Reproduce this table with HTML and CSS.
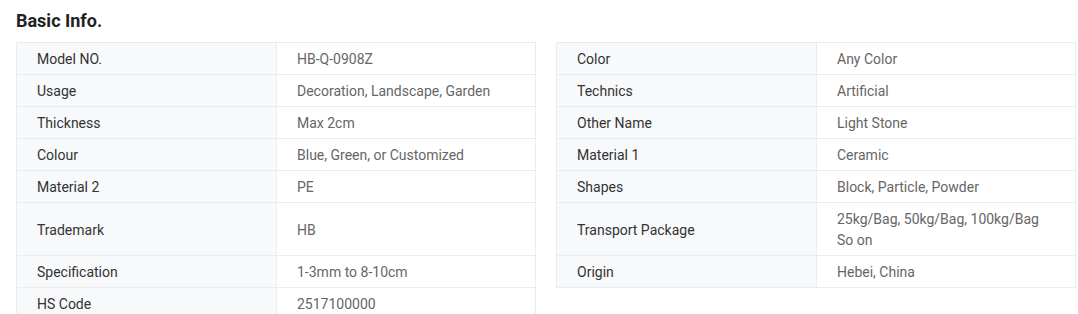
FILE: index.html
```html
<!DOCTYPE html>
<html lang="en">
<head>
<meta charset="utf-8">
<title>Basic Info.</title>
<link rel="stylesheet" href="styles.css">
</head>
<body>
<div class="page">
  <h2 class="title">Basic Info.</h2>
  <div class="tables">
    <table class="info">
      <tr><th>Model NO.</th><td>HB-Q-0908Z</td></tr>
      <tr><th>Usage</th><td>Decoration, Landscape, Garden</td></tr>
      <tr><th>Thickness</th><td>Max 2cm</td></tr>
      <tr><th>Colour</th><td>Blue, Green, or Customized</td></tr>
      <tr><th>Material 2</th><td>PE</td></tr>
      <tr class="tall"><th>Trademark</th><td>HB</td></tr>
      <tr><th>Specification</th><td>1-3mm to 8-10cm</td></tr>
      <tr><th>HS Code</th><td>2517100000</td></tr>
    </table>
    <table class="info">
      <tr><th>Color</th><td>Any Color</td></tr>
      <tr><th>Technics</th><td>Artificial</td></tr>
      <tr><th>Other Name</th><td>Light Stone</td></tr>
      <tr><th>Material 1</th><td>Ceramic</td></tr>
      <tr><th>Shapes</th><td>Block, Particle, Powder</td></tr>
      <tr class="tall"><th>Transport Package</th><td>25kg/Bag, 50kg/Bag, 100kg/Bag<br>So on</td></tr>
      <tr><th>Origin</th><td>Hebei, China</td></tr>
    </table>
  </div>
</div>
</body>
</html>
```
FILE: styles.css
```css
* { box-sizing: border-box; }
html, body { margin: 0; padding: 0; background: #fff; }
body { font-family: Roboto, "Noto Sans", Arial, sans-serif; }
.page { padding: 9px 2px 0 16px; }
.title {
  margin: 0 0 9px 0;
  font-size: 18px;
  line-height: 24px;
  font-weight: 700;
  color: #222;
}
.tables {
  display: flex;
  gap: 20px;
  align-items: flex-start;
}
.info {
  width: 520px;
  border-collapse: collapse;
  table-layout: fixed;
  font-size: 14px;
  line-height: 21px;
}
.info th, .info td {
  border: 1px solid #e8edf3;
  padding: 6px 20px 4px;
  text-align: left;
  vertical-align: middle;
  font-weight: 400;
}
.info th { background: #f8f9fb; color: #333; width: 260px; }
.info td { color: #666; }
.info .tall th, .info .tall td { height: 53px; }
```
